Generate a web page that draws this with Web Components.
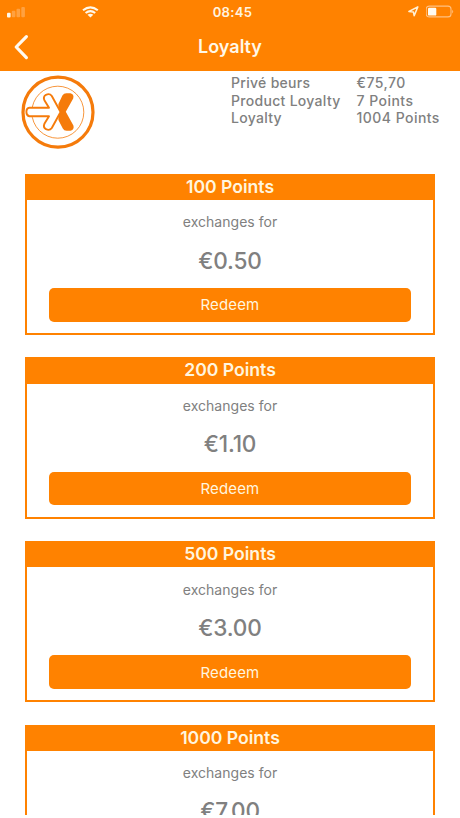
<!DOCTYPE html>
<html lang="en">
<head>
<meta charset="utf-8">
<title>Loyalty</title>
<style>
html, body { margin: 0; height: 100%; overflow: hidden; background: #fff; }
body { font-family: Inter, "Liberation Sans", sans-serif; --brand: #ff8200; --ink: #808080; }
</style>
</head>
<body>
<loyalty-app></loyalty-app>
<script>
const define = (name, html) => customElements.define(name, class extends HTMLElement {
  constructor() {
    super();
    this.attachShadow({ mode: 'open' }).innerHTML = html;
  }
});

define('status-bar', `
<style>
  :host { display: grid; grid-template-columns: 1fr auto 1fr; align-items: center; height: 24px; color: #fff4e0; box-sizing: border-box; padding: 0 5px 0 6px; }
  .side { display: flex; align-items: center; }
  .right { justify-content: flex-end; gap: 6px; }
  .wifi { margin-left: 56px; }
  time { font-size: 13.1px; font-weight: 600; line-height: 24px; letter-spacing: .3px; padding-left: 4px; }
  svg { display: block; }
</style>
<div class="side">
  <svg width="20" height="14" viewBox="0 0 20 14">
    <rect x="1" y="7.7" width="3.6" height="4.8" rx="1" fill="#fff8ea"/>
    <g fill="#fff" opacity=".25"><rect x="5.8" y="5.8" width="3.6" height="6.4" rx="1"/><rect x="10.5" y="3.8" width="3.6" height="8.4" rx="1"/><rect x="15.3" y="2" width="3.6" height="10.2" rx="1"/></g>
  </svg>
  <svg class="wifi" width="17" height="12" viewBox="0 0 17 12" fill="none" stroke="#fff8ea" stroke-width="2.1">
    <path d="M1 4.3Q8.4 -1.7 15.8 4.3M3.6 7Q8.4 3.1 13.2 7"/>
    <path d="M5.5 8.8Q8.4 6.8 11.3 8.8L8.4 11.6Z" fill="#fff8ea" stroke="none"/>
  </svg>
</div>
<time>08:45</time>
<div class="side right">
  <svg width="12" height="12" viewBox="0 0 12 12" fill="none" stroke="#fff0d5" stroke-width="1.5" stroke-linejoin="round"><path d="M.9 5.5L9.8 .9L6.2 9.8L5.4 6Z"/></svg>
  <svg width="29" height="14" viewBox="0 0 29 14">
    <rect x=".2" y="1.1" width="24.8" height="10.8" rx="3" fill="none" stroke="#ffc080" stroke-width="1.1"/>
    <rect x="2" y="2.8" width="8.3" height="7.8" rx="1.2" fill="#fffaf0"/>
    <path d="M26.2 4.8Q28.2 6.6 26.2 8.4Z" fill="#ffc080"/>
  </svg>
</div>`);

define('nav-bar', `
<style>
  :host { display: grid; grid-template-columns: 1fr auto 1fr; align-items: center; height: 47.4px; color: #fff8e8; }
  svg { display: block; margin-left: 12px; margin-bottom: 1px; }
  h1 { margin: 0; font-size: 18px; font-weight: 600; line-height: 44px; padding-bottom: 2px; }
</style>
<svg width="18" height="26" viewBox="0 0 18 26" fill="none" stroke="#fffaf0" stroke-width="3.2" stroke-linecap="round" stroke-linejoin="round"><path d="M14.4 2.6L4.2 13L14.4 23.6"/></svg>
<h1><slot></slot></h1><span></span>`);

define('brand-logo', `
<style>:host { display: block; width: 76px; height: 76px; } svg { display: block; }</style>
<svg width="76" height="76" viewBox="0 0 76 76" fill="none" stroke="#f57b0b">
  <circle cx="38" cy="38.2" r="35" stroke-width="3.2"/>
  <circle cx="37.8" cy="38.2" r="26" stroke-width=".8"/>
  <path d="M38.4 30L42.4 21.6Q43.8 19.2 46.4 19.2H50.4Q54.4 20 53.2 24.4L45.8 37.8L53.4 51.6Q54.6 55.6 50.6 56.8H46.6Q44 56.8 42.8 54.4L38.4 46Z" fill="#f57b0b" stroke="none"/>
  <path d="M9.4 33.8H29L24.4 26.2Q22.8 22.8 26 20.8Q29.6 19 31.8 22L40.6 38L31.8 54Q29.6 57 26 55.2Q22.8 53.2 24.4 49.8L29 42.3H9.4Q6.4 41.8 6.4 38Q6.4 34.2 9.4 33.8Z" fill="#fff" stroke-width="1.9" stroke-linejoin="round"/>
</svg>`);

define('balance-row', `
<style>
  :host { display: grid; grid-template-columns: 125.6px auto; height: 17.3px; line-height: 17.3px; font-size: 14px; font-weight: 500; color: var(--ink); white-space: nowrap; letter-spacing: .3px; }
  .value { letter-spacing: .45px; }
</style>
<span><slot name="label"></slot></span><span class="value"><slot></slot></span>`);

define('redeem-button', `
<style>
  :host { display: block; }
  button { display: block; width: 100%; height: 33.4px; padding: 0; border: 0; border-radius: 5px; background: var(--brand); color: #fff5df; font: 400 15px/33px Inter, "Liberation Sans", sans-serif; letter-spacing: .15px; }
</style>
<button type="button"><slot></slot></button>`);

define('reward-card', `
<style>
  :host { display: block; box-sizing: border-box; height: 161.2px; border: 2.4px solid var(--brand); text-align: center; color: var(--ink); background: #fff; flex: none; }
  h2 { margin: 0; height: 24.4px; font-size: 17.6px; line-height: 22.6px; letter-spacing: 0; font-weight: 600; background: var(--brand); color: #fff5df; }
  p { margin: 12.3px 0 0; font-size: 14px; line-height: 20px; letter-spacing: .03px; }
  strong { display: block; margin-top: 13.2px; font-size: 22.6px; line-height: 30px; font-weight: 500; letter-spacing: -.2px; }
  redeem-button { margin: 12.5px 22.4px 0 22.2px; }
</style>
<h2><slot name="points"></slot></h2>
<p>exchanges for</p>
<strong><slot></slot></strong>
<redeem-button>Redeem</redeem-button>`);

define('loyalty-app', `
<style>
  :host { display: flex; flex-direction: column; width: 460px; height: 815px; overflow: hidden; }
  header { flex: none; background: var(--brand); }
  .summary { flex: none; display: flex; justify-content: space-between; height: 102.4px; box-sizing: border-box; padding: 3px 20px 0; }
  .balances { width: 209px; }
  main { display: flex; flex-direction: column; gap: 22.4px; padding: 0 25px; min-height: 0; }
</style>
<header><status-bar></status-bar><nav-bar>Loyalty</nav-bar></header>
<section class="summary">
  <brand-logo></brand-logo>
  <div class="balances">
    <balance-row><span slot="label">Privé beurs</span>€75,70</balance-row>
    <balance-row><span slot="label">Product Loyalty</span>7 Points</balance-row>
    <balance-row><span slot="label">Loyalty</span>1004 Points</balance-row>
  </div>
</section>
<main>
  <reward-card><span slot="points">100 Points</span>€0.50</reward-card>
  <reward-card><span slot="points">200 Points</span>€1.10</reward-card>
  <reward-card><span slot="points">500 Points</span>€3.00</reward-card>
  <reward-card><span slot="points">1000 Points</span>€7.00</reward-card>
</main>`);
</script>
</body>
</html>
